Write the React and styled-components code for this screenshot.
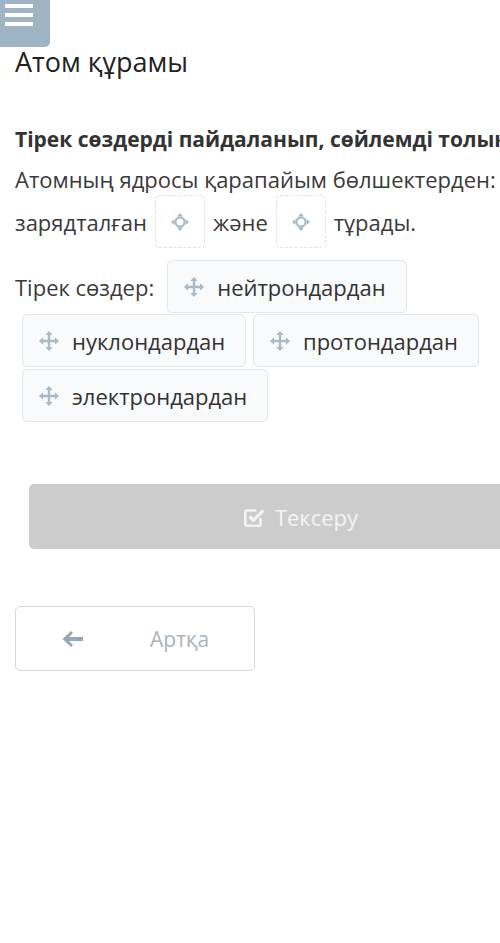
import React from "react";
import styled, { createGlobalStyle } from "styled-components";

const Global = createGlobalStyle`
  html, body { margin: 0; padding: 0; background: #fff; overflow: hidden; }
  body { font-family: "Open Sans", "Noto Sans", sans-serif; color: #3a3a3a; }
`;

const Page = styled.div`
  width: 620px;
  min-height: 943px;
  display: flex;
  flex-direction: column;
`;

const MenuButton = styled.div`
  width: 50px;
  height: 47px;
  background: #9fb4c2;
  border-bottom-right-radius: 5px;
  display: flex;
  flex-direction: column;
  gap: 5px;
  padding: 4px 0 0 5px;
  box-sizing: border-box;
`;

const MenuLine = styled.div`
  width: 28px;
  height: 4px;
  background: #fff;
`;

const Content = styled.div`
  padding: 0 15px;
  display: flex;
  flex-direction: column;
`;

const Title = styled.h1`
  margin: 0;
  font-size: 27px;
  font-weight: 400;
  color: #222;
  line-height: 30px;
`;

const Heading = styled.h2`
  margin: 49px 0 0;
  font-size: 21px;
  font-weight: 700;
  color: #333;
  line-height: 26px;
  white-space: nowrap;
`;

const Line = styled.div`
  font-size: 22px;
  line-height: 30px;
  white-space: nowrap;
  margin-top: 12px;
`;

const Row = styled.div`
  display: flex;
  align-items: center;
  gap: ${(p) => p.$gap || 8}px;
  font-size: 22px;
  margin-top: ${(p) => p.$mt || 0}px;
  padding-left: ${(p) => p.$pl || 0}px;
  white-space: nowrap;
`;

const Drop = styled.div`
  width: 50px;
  height: 53px;
  box-sizing: border-box;
  border: 1.5px dashed #dde2e6;
  border-radius: 4px;
  display: flex;
  align-items: center;
  justify-content: center;
`;

const Chip = styled.div`
  height: 53px;
  box-sizing: border-box;
  border: 1px solid #dfe6ec;
  border-radius: 5px;
  background: #f8fafc;
  display: flex;
  align-items: center;
  gap: 12px;
  padding: 0 0 0 15px;
  font-size: 22px;
  color: #333;
  width: ${(p) => p.$w}px;
`;

const CheckButton = styled.div`
  margin: 62px 0 0 14px;
  height: 65px;
  width: 542px;
  background: #cccccc;
  border-radius: 5px;
  display: flex;
  align-items: center;
  justify-content: center;
  gap: 9px;
  color: #f4f4f4;
  font-size: 22px;
`;

const BackButton = styled.div`
  margin-top: 57px;
  width: 240px;
  height: 65px;
  box-sizing: border-box;
  border: 1.5px solid #d4d8db;
  border-radius: 5px;
  display: flex;
  align-items: center;
  padding-left: 46px;
  gap: 66px;
  color: #a9b4bb;
  font-size: 21px;
`;

const Move = () => (
  <svg width="22" height="22" viewBox="0 0 24 24" fill="#a9b9c5">
    <path d="M12 1 L16 5.5 H13.3 V10.7 H18.5 V8 L23 12 L18.5 16 V13.3 H13.3 V18.5 H16 L12 23 L8 18.5 H10.7 V13.3 H5.5 V16 L1 12 L5.5 8 V10.7 H10.7 V5.5 H8 Z" />
  </svg>
);

const Target = () => (
  <svg width="20" height="20" viewBox="0 0 20 20">
    <circle cx="10" cy="10" r="4.5" fill="none" stroke="#a7b7c3" strokeWidth="2" />
    <path d="M10 1 L13 4.5 H7 Z M10 19 L13 15.5 H7 Z M1 10 L4.5 7 V13 Z M19 10 L15.5 7 V13 Z" fill="#a7b7c3" />
  </svg>
);

const CheckIcon = () => (
  <svg width="24" height="24" viewBox="0 0 22 22" fill="none" stroke="#f4f4f4" strokeWidth="2.4">
    <path d="M17 12 V17.5 a1.5 1.5 0 0 1 -1.5 1.5 H4.5 A1.5 1.5 0 0 1 3 17.5 V6.5 A1.5 1.5 0 0 1 4.5 5 H13" />
    <path d="M7 10.5 L10.5 14 L19.5 5" strokeWidth="3" />
  </svg>
);

const Arrow = () => (
  <svg width="22" height="18" viewBox="0 0 22 18" fill="#93a8b6">
    <path d="M0.5 9 L9 1 L11 3 L7 7 H21 V11 H7 L11 15 L9 17 Z" />
  </svg>
);

export default function App() {
  return (
    <>
      <Global />
      <Page>
        <MenuButton>
          <MenuLine />
          <MenuLine />
          <MenuLine />
        </MenuButton>
        <Content>
          <Title>Атом құрамы</Title>
          <Heading>Тірек сөздерді пайдаланып, сөйлемді толықтыр</Heading>
          <Line>Атомның ядросы қарапайым бөлшектерден:</Line>
          <Row $gap={8} $mt={1}>
            <span>зарядталған</span>
            <Drop><Target /></Drop>
            <span>және</span>
            <Drop><Target /></Drop>
            <span>тұрады.</span>
          </Row>
          <Row $gap={13} $mt={12}>
            <span>Тірек сөздер:</span>
            <Chip $w={240}><Move />нейтрондардан</Chip>
          </Row>
          <Row $gap={7} $mt={1} $pl={7}>
            <Chip $w={224}><Move />нуклондардан</Chip>
            <Chip $w={226}><Move />протондардан</Chip>
          </Row>
          <Row $gap={7} $mt={2} $pl={7}>
            <Chip $w={246}><Move />электрондардан</Chip>
          </Row>
          <CheckButton><CheckIcon />Тексеру</CheckButton>
          <BackButton><Arrow />Артқа</BackButton>
        </Content>
      </Page>
    </>
  );
}
